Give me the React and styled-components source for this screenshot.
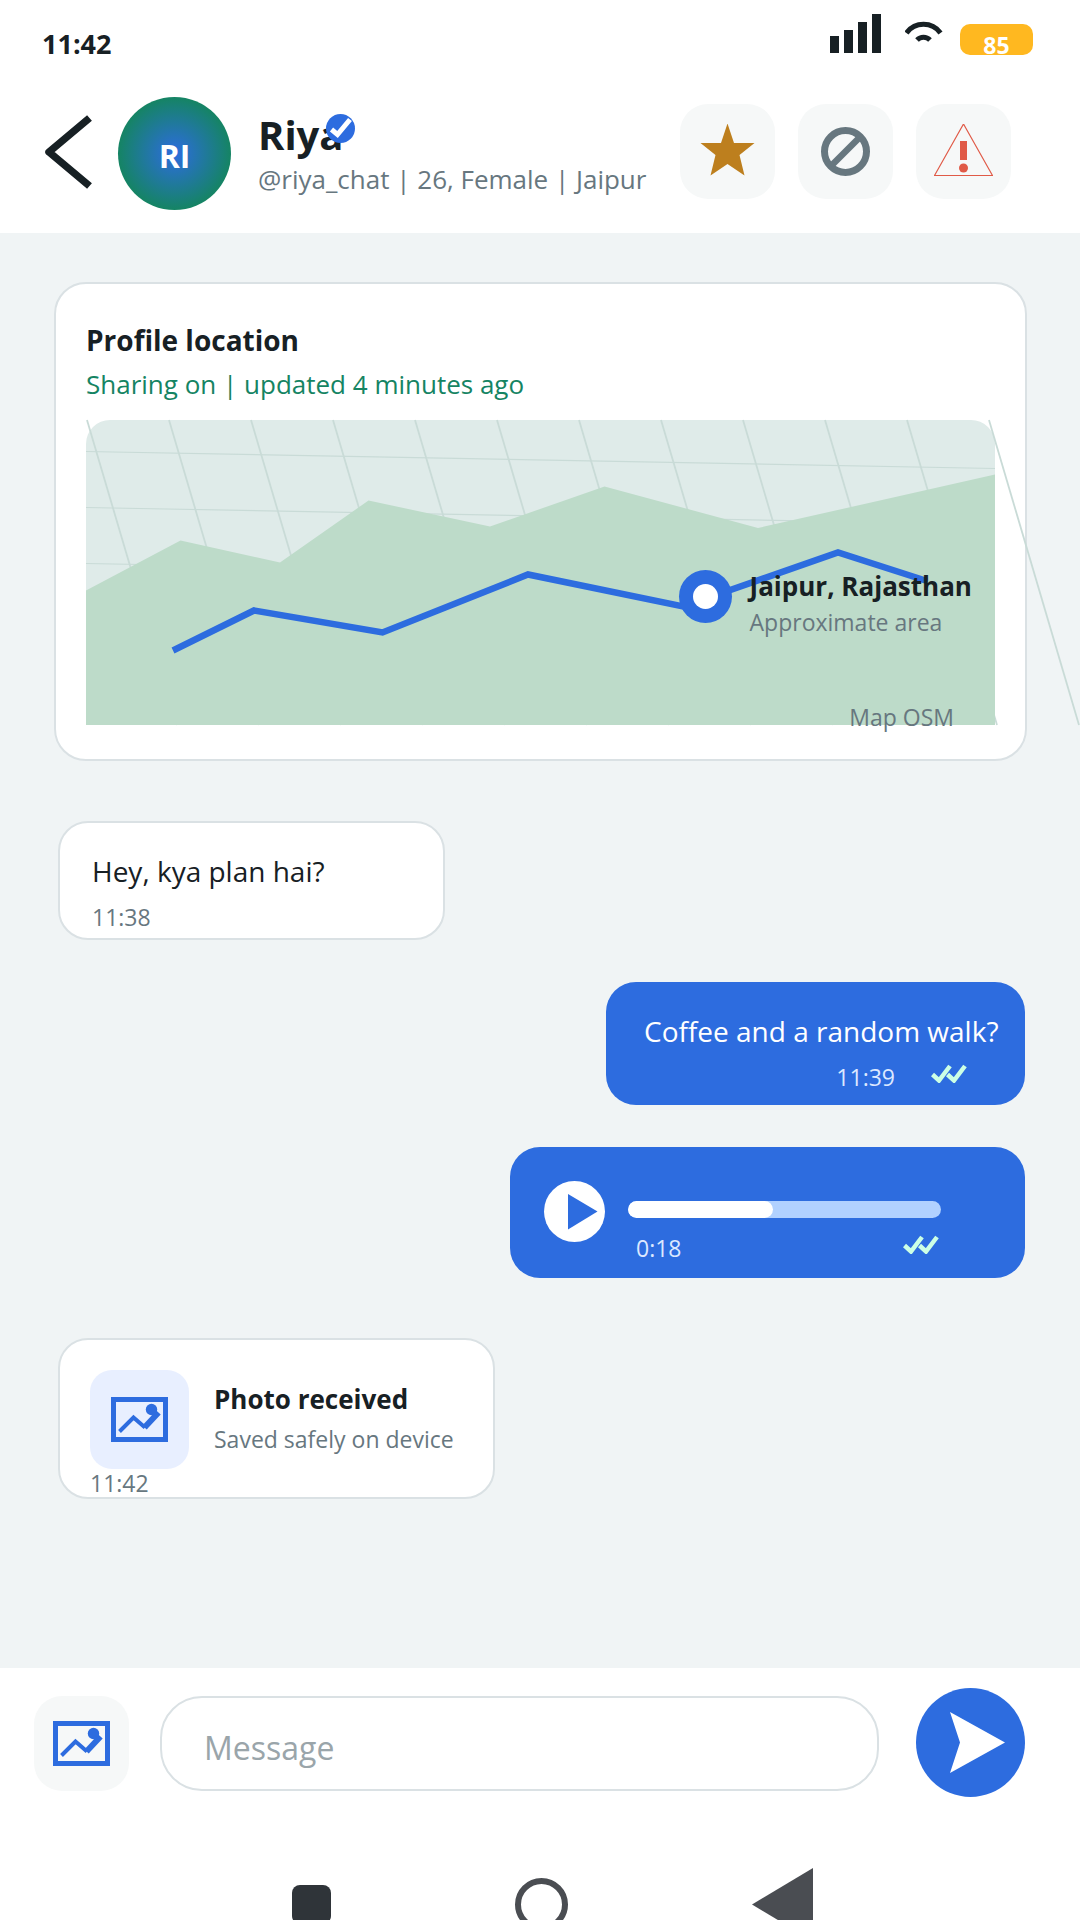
import styled, { createGlobalStyle } from "styled-components";

const GlobalStyle = createGlobalStyle`
	* {
		box-sizing: border-box;
	}

	body {
		margin: 0;
		overflow-x: hidden;
		background-color: #ffffff;
		color: #172024;
		font-family: "Open Sans", "Noto Sans", sans-serif;
	}

	h1, h2, h3, p {
		margin: 0;
	}

	button {
		padding: 0;
		border: none;
		background: none;
		font-family: inherit;
		cursor: pointer;
	}

	svg {
		display: block;
	}
`;

function SignalIcon() {
	return (
		<svg width="51" height="44" viewBox="0 0 51 44" fill="#172024">
			<rect x="0" y="22" width="9" height="17" />
			<rect x="14" y="16" width="9" height="23" />
			<rect x="28" y="8" width="9" height="31" />
			<rect x="42" y="0" width="9" height="39" />
		</svg>
	);
}

function WifiIcon() {
	return (
		<svg width="38" height="44" viewBox="0 0 38 44" fill="none" stroke="#172024" strokeWidth="5">
			<path d="M1.5 19A21 21 0 0 1 35.5 19" />
			<path d="M12 26A9 9 0 0 1 25 26" />
		</svg>
	);
}

function BackIcon() {
	return (
		<svg width="47" height="78" viewBox="0 0 47 78" fill="none" stroke="#172024" strokeWidth="7.5">
			<path d="M44.5 3L4 37L44.5 71" strokeLinejoin="round" />
		</svg>
	);
}

function VerifiedIcon() {
	return (
		<svg width="29" height="29" viewBox="0 0 29 29">
			<circle cx="14.5" cy="14.5" r="14.5" fill="#2d6cdf" />
			<path d="M5.5 15.5L11.5 20.5L24 5.5" fill="none" stroke="#ffffff" strokeWidth="5" />
		</svg>
	);
}

function StarIcon() {
	return (
		<svg width="55" height="55" viewBox="0 0 55 55" fill="#bd7f1e">
			<path d="M27.5 -0.5L34 19H54.5L39.5 31L44.5 51.5L27.5 40L10.5 51.5L15.5 31L0.5 19H21Z" />
		</svg>
	);
}

function BlockIcon() {
	return (
		<svg width="55" height="55" viewBox="0 0 55 55" fill="none" stroke="#67777f">
			<circle cx="27.5" cy="27.5" r="21" strokeWidth="7" />
			<path d="M13 42L42 13" strokeWidth="6.5" />
		</svg>
	);
}

function ReportIcon() {
	return (
		<svg width="59" height="55" viewBox="0 0 59 55">
			<path d="M29.5 0L0.5 51.5H58.5Z" fill="none" stroke="#e05a47" strokeWidth="1.2" />
			<rect x="26" y="17" width="7" height="19" fill="#e05a47" />
			<circle cx="29.5" cy="44" r="4.5" fill="#e05a47" />
		</svg>
	);
}

function PhotoIcon() {
	return (
		<svg width="57" height="45" viewBox="0 0 57 45" fill="none" stroke="#2d6cdf">
			<rect x="2.5" y="2.5" width="52" height="40" strokeWidth="5" />
			<path d="M8.5 34.5L22.5 20.5L34 30.5" strokeWidth="4" />
			<path d="M33.5 30.5L47.5 15.5" strokeWidth="6" />
			<circle cx="40.5" cy="12.5" r="5.7" fill="#2d6cdf" stroke="none" />
		</svg>
	);
}

function ReadIcon() {
	return (
		<svg width="36" height="22" viewBox="0 0 36 22" fill="none" stroke="#ccffe5" strokeWidth="4.5">
			<path d="M1.5 13.5L8 19.5L19 5" />
			<path d="M16.5 13.5L23 19.5L34 5" />
		</svg>
	);
}

function PlayIcon() {
	return (
		<svg width="61" height="61" viewBox="0 0 61 61">
			<circle cx="30.5" cy="30.5" r="30.5" fill="#ffffff" />
			<path d="M24 13V48.5L53.5 30.5Z" fill="#2d6cdf" />
		</svg>
	);
}

function SendIcon() {
	return (
		<svg width="109" height="109" viewBox="0 0 109 109">
			<circle cx="54.5" cy="54.5" r="54.5" fill="#2d6cdf" />
			<path d="M34 24L89 54.5L34 85L44 54.5Z" fill="#ffffff" />
		</svg>
	);
}

const meridians = [0, 1, 2, 3, 4, 5, 6, 7, 8, 9, 10, 11];
const parallels = [31.5, 87.5, 143.5];

function LocationMap() {
	return (
		<MapBox>
			<MapDrawing viewBox="0 0 909 305">
				<rect width="909" height="305" rx="24" fill="#dfebe9" />
				<g stroke="#c9dbd7">
					{meridians.map((i) => (
						<line key={i} x1={1 + i * 82} y1="0" x2={91 + i * 82} y2="305" strokeWidth="1.8" />
					))}
					{parallels.map((y) => (
						<line key={y} x1="0" y1={y} x2="909" y2={y + 17} strokeWidth="1.2" />
					))}
				</g>
				<path
					d="M0 170.5L94.5 120.5L194 142.5L282.5 80.5L404 106.5L518.5 66.5L672 108L909 54.5V305H0Z"
					fill="#bddbc9"
				/>
				<path
					d="M87 230.5L168 190.5L296.5 212.5L442 154.5L597 186.5L752 132.5L841 161"
					fill="none"
					stroke="#2d6cdf"
					strokeWidth="6.5"
				/>
				<circle cx="619.5" cy="176.5" r="26.5" fill="#2d6cdf" />
				<circle cx="619.5" cy="176.5" r="12.5" fill="#ffffff" />
			</MapDrawing>
			<Place>
				<PlaceName>Jaipur, Rajasthan</PlaceName>
				<Small>Approximate area</Small>
			</Place>
			<Attribution>Map OSM</Attribution>
		</MapBox>
	);
}

function App() {
	return (
		<Screen>
			<GlobalStyle />
			<StatusBar>
				<Clock>11:42</Clock>
				<StatusIcons>
					<SignalIcon />
					<WifiIcon />
					<Battery>85</Battery>
				</StatusIcons>
			</StatusBar>

			<Header>
				<button aria-label="Back">
					<BackIcon />
				</button>
				<Avatar>RI</Avatar>
				<Person>
					<Name>
						Riya
						<Badge>
							<VerifiedIcon />
						</Badge>
					</Name>
					<Handle>@riya_chat | 26, Female | Jaipur</Handle>
				</Person>
				<Actions>
					<IconButton aria-label="Favourite">
						<StarIcon />
					</IconButton>
					<IconButton aria-label="Block">
						<BlockIcon />
					</IconButton>
					<IconButton aria-label="Report">
						<ReportIcon />
					</IconButton>
				</Actions>
			</Header>

			<Chat>
				<Card>
					<CardTitle>Profile location</CardTitle>
					<Sharing>Sharing on | updated 4 minutes ago</Sharing>
					<LocationMap />
				</Card>

				<Received $spaced>
					<Text>Hey, kya plan hai?</Text>
					<Small>11:38</Small>
				</Received>

				<Sent>
					<Text>Coffee and a random walk?</Text>
					<SentInfo>
						<Small $light>11:39</Small>
						<ReadIcon />
					</SentInfo>
				</Sent>

				<Voice>
					<button aria-label="Play">
						<PlayIcon />
					</button>
					<Player>
						<Track value="145" max="313" aria-label="Playback" />
						<VoiceInfo>
							<Small $light>0:18</Small>
							<ReadIcon />
						</VoiceInfo>
					</Player>
				</Voice>

				<PhotoMessage $spaced>
					<PhotoRow>
						<Thumb>
							<PhotoIcon />
						</Thumb>
						<div>
							<PhotoTitle>Photo received</PhotoTitle>
							<Small>Saved safely on device</Small>
						</div>
					</PhotoRow>
					<PhotoTime>11:42</PhotoTime>
				</PhotoMessage>
			</Chat>

			<Composer>
				<IconButton aria-label="Attach photo">
					<PhotoIcon />
				</IconButton>
				<MessageInput type="text" placeholder="Message" aria-label="Message" />
				<SendButton aria-label="Send">
					<SendIcon />
				</SendButton>
			</Composer>

			<SystemNav>
				<NavKeys>
					<button aria-label="Recent apps">
						<RecentKey />
					</button>
					<button aria-label="Home">
						<HomeKey />
					</button>
					<button aria-label="Previous">
						<svg width="61" height="73" viewBox="0 0 61 73" fill="#4a4d52">
							<path d="M0 36.5L61 0V73Z" />
						</svg>
					</button>
				</NavKeys>
			</SystemNav>
		</Screen>
	);
}

const Screen = styled.div`
	min-height: 100vh;
	overflow: hidden;

	display: flex;
	flex-direction: column;
`;

const StatusBar = styled.div`
	height: 58px;
	padding: 14px 47px 0 42px;

	display: flex;
	align-items: flex-end;
	justify-content: space-between;
`;

const Clock = styled.div`
	font-size: 27px;
	font-weight: 700;
	line-height: 28px;
`;

const StatusIcons = styled.div`
	display: flex;
	align-items: flex-end;
	gap: 24px;
`;

const Battery = styled.div`
	width: 73px;
	height: 31px;
	margin: 0 0 3px -7px;
	border-radius: 10px;

	font-size: 23px;
	font-weight: 700;
	line-height: 42px;
	text-align: center;

	color: #ffffff;
	background-color: #ffb820;
`;

const Header = styled.header`
	padding: 39px 69px 23px 45px;

	display: flex;
	align-items: center;
`;

const Avatar = styled.div`
	width: 113px;
	height: 113px;
	margin: 0 27px 0 26px;
	padding-top: 3px;
	border-radius: 50%;

	display: flex;
	align-items: center;
	justify-content: center;

	font-size: 32px;
	font-weight: 700;

	color: #ffffff;
	background: radial-gradient(closest-side, #2d6cdf, #158463);
`;

const Person = styled.div`
	flex: 1;
	white-space: nowrap;
`;

const Name = styled.h1`
	position: relative;
	width: fit-content;
	margin-bottom: 2px;

	font-size: 40px;
	font-weight: 700;
	line-height: 48px;
`;

const Badge = styled.span`
	position: absolute;
	top: 3px;
	left: 68px;
`;

const Handle = styled.p`
	font-size: 26px;
	line-height: 36px;
	color: #67777f;
`;

const Actions = styled.div`
	padding-bottom: 4px;

	display: flex;
	gap: 23px;
`;

const IconButton = styled.button`
	width: 95px;
	height: 95px;
	border-radius: 28px;

	display: flex;
	flex-shrink: 0;
	align-items: center;
	justify-content: center;

	background-color: #f6f8f8;
`;

const Chat = styled.main`
	flex: 1;
	padding: 49px 53px 42px 54px;

	display: flex;
	flex-direction: column;
	gap: 42px;

	background-color: #f0f4f5;
`;

const Card = styled.section`
	padding: 34px 30px;
	border: 2px solid #dae1e4;
	border-radius: 32px;

	background-color: #ffffff;
`;

const CardTitle = styled.h2`
	font-size: 28px;
	font-weight: 700;
	line-height: 44px;
`;

const Sharing = styled.p`
	margin-bottom: 14px;

	font-size: 26px;
	line-height: 44px;
	color: #158463;
`;

const MapBox = styled.div`
	position: relative;
`;

const MapDrawing = styled.svg`
	width: 100%;
	overflow: visible;
`;

const Place = styled.div`
	position: absolute;
	top: 48%;
	left: 73%;
	white-space: nowrap;
`;

const PlaceName = styled.h3`
	font-size: 26px;
	font-weight: 700;
	line-height: 40px;
`;

const Small = styled.p`
	font-size: 23px;
	line-height: 32px;
	color: ${(props) => (props.$light ? "#dce8ff" : "#67777f")};
`;

const Attribution = styled(Small)`
	position: absolute;
	right: 41px;
	bottom: -8px;
`;

const Bubble = styled.article`
	border-radius: 30px;
	margin-top: ${(props) => (props.$spaced ? "18px" : "0")};
`;

const Received = styled(Bubble)`
	align-self: flex-start;
	min-width: 387px;
	margin-left: 4px;
	padding: 28px 32px 5px;
	border: 2px solid #dae1e4;

	background-color: #ffffff;
`;

const Sent = styled(Bubble)`
	align-self: flex-end;
	min-width: 419px;
	margin-right: 2px;
	padding: 29px 20px 12px 38px;

	color: #ffffff;
	background-color: #2d6cdf;
`;

const Text = styled.p`
	margin-bottom: 10px;

	font-size: 28px;
	line-height: 40px;
`;

const SentInfo = styled.div`
	padding-right: 38px;

	display: flex;
	align-items: flex-start;
	justify-content: flex-end;
	gap: 36px;
`;

const Voice = styled(Bubble)`
	align-self: flex-end;
	width: 515px;
	max-width: 100%;
	margin-right: 2px;
	padding: 34px 84px 14px 34px;

	display: flex;
	align-items: flex-start;
	gap: 23px;

	background-color: #2d6cdf;
`;

const Player = styled.div`
	flex: 1;
	padding-top: 20px;
`;

const Track = styled.progress`
	appearance: none;
	display: block;
	width: 100%;
	height: 17px;
	border: none;
	border-radius: 9px;
	overflow: hidden;

	&::-webkit-progress-bar {
		background-color: #b1d1ff;
	}

	&::-webkit-progress-value {
		border-radius: 9px;
		background-color: #ffffff;
	}
`;

const VoiceInfo = styled.div`
	margin-top: 14px;
	padding: 0 2px 0 8px;

	display: flex;
	align-items: flex-start;
	justify-content: space-between;
`;

const PhotoMessage = styled(Received)`
	min-width: 437px;
	padding: 30px 30px 2px;
`;

const PhotoRow = styled.div`
	display: flex;
	align-items: flex-start;
	gap: 25px;

	white-space: nowrap;
`;

const Thumb = styled.div`
	width: 99px;
	height: 99px;
	border-radius: 22px;

	display: flex;
	align-items: center;
	justify-content: center;

	background-color: #e8efff;
`;

const PhotoTitle = styled.h3`
	margin: 9px 0 4px;

	font-size: 26px;
	font-weight: 700;
	line-height: 40px;
`;

const PhotoTime = styled(Small)`
	margin-top: 2px;
	line-height: 24px;
`;

const Composer = styled.form`
	padding: 20px 55px 0 34px;

	display: flex;
	align-items: center;
`;

const MessageInput = styled.input`
	flex: 1;
	min-width: 0;
	height: 95px;
	margin: 0 37px 0 31px;
	padding: 7px 42px 0;
	border: 2px solid #dae1e4;
	border-radius: 42px;

	font-family: inherit;
	font-size: 32px;

	color: #172024;
	background-color: #ffffff;

	&::placeholder {
		color: #9aa5aa;
	}
`;

const SendButton = styled.button`
	padding-bottom: 2px;
`;

const SystemNav = styled.nav`
	height: 121px;
	padding: 69px 0 0 25px;
	overflow: hidden;
`;

const NavKeys = styled.div`
	display: flex;
	align-items: center;
	justify-content: center;
	gap: 184px;
`;

const RecentKey = styled.span`
	display: block;
	width: 39px;
	height: 39px;
	border-radius: 8px;

	background-color: #2f3439;
`;

const HomeKey = styled.span`
	display: block;
	width: 53px;
	height: 53px;
	border: 6px solid #4a4d52;
	border-radius: 50%;
`;

export default App;
